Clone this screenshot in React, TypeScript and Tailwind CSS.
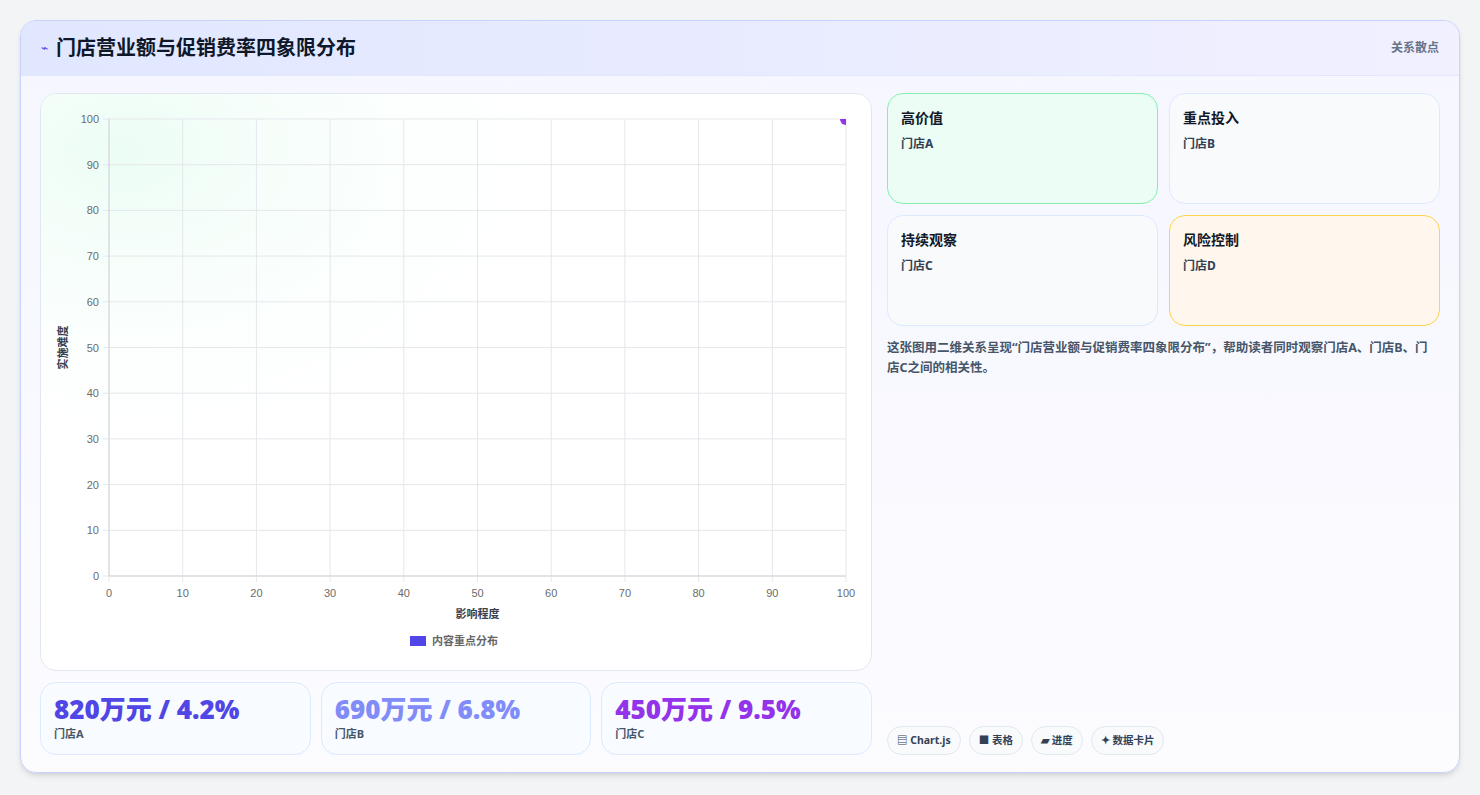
import React from "react";

const F = { fontFamily: '"Noto Sans", "Noto Sans CJK SC", sans-serif' };

function Chart() {
  const x0 = 68, x1 = 805, y0 = 25, y1 = 482;
  const ticks = [0, 10, 20, 30, 40, 50, 60, 70, 80, 90, 100];
  const X = (v: number) => x0 + ((x1 - x0) * v) / 100;
  const Y = (v: number) => y1 - ((y1 - y0) * v) / 100;
  return (
    <svg width="831" height="577" className="absolute left-0 top-0" style={{ fontFamily: '"Liberation Sans", sans-serif' }}>
      <defs>
        <radialGradient id="g" cx="0.1" cy="0.1" r="0.6">
          <stop offset="0" stopColor="#ecfdf5" />
          <stop offset="1" stopColor="#ffffff" stopOpacity="0" />
        </radialGradient>
        <clipPath id="c"><rect x={x0} y={y0} width={x1 - x0} height={y1 - y0} /></clipPath>
      </defs>
      <rect x="0" y="0" width="831" height="577" fill="url(#g)" />
      {ticks.map((t) => (
        <g key={t}>
          <line x1={X(t)} x2={X(t)} y1={y0} y2={y1 + 6} stroke="#e5e7eb" />
          <line x1={x0 - 6} x2={x1} y1={Y(t)} y2={Y(t)} stroke="#e5e7eb" />
          <text x={X(t)} y={y1 + 21} fontSize="11" fill="#6b6b6b" textAnchor="middle">{t}</text>
          <text x={x0 - 10} y={Y(t) + 4} fontSize="11" fill="#6b6b6b" textAnchor="end">{t}</text>
        </g>
      ))}
      <line x1={x0} x2={x0} y1={y0} y2={y1} stroke="#d1d5db" />
      <line x1={x0} x2={x1} y1={y1} y2={y1} stroke="#d1d5db" />
      <g clipPath="url(#c)">
        <circle cx={X(100)} cy={Y(100)} r="6" fill="#9333ea" />
      </g>
      <text x={(x0 + x1) / 2} y="524" fontSize="11" fontWeight="bold" fill="#374151" textAnchor="middle" style={F}>影响程度</text>
      <text x="0" y="0" fontSize="11" fontWeight="bold" fill="#374151" textAnchor="middle" transform={`translate(26 ${(y0 + y1) / 2}) rotate(-90)`} style={F}>实施难度</text>
      <rect x="369" y="542" width="16" height="10" fill="#4f46e5" />
      <text x="391" y="551" fontSize="11" fill="#666" fontWeight="bold" style={F}>内容重点分布</text>
    </svg>
  );
}

function Quad({ t, s, cls }: { t: string; s: string; cls: string }) {
  return (
    <div className={`h-[111px] rounded-2xl border px-[13px] py-[13px] ${cls}`}>
      <div className="text-[14px] font-bold text-[#111827]">{t}</div>
      <div className="mt-[7px] text-[12px] font-bold text-[#334155]">{s}</div>
    </div>
  );
}

function Stat({ v, s, c }: { v: string; s: string; c: string }) {
  return (
    <div className="flex-1 h-[73px] rounded-2xl border border-[#dbeafe] bg-[#f8fbff] px-[13px] pt-[9px]">
      <div className={`text-[26px] font-black leading-[34px] ${c}`}>{v}</div>
      <div className="text-[11px] font-bold text-[#475569]">{s}</div>
    </div>
  );
}

export default function App() {
  return (
    <div className="w-[1480px] h-[795px] bg-[#f3f4f6] pt-[20px] px-[20px]" style={F}>
      <div className="h-[753px] rounded-2xl border border-[#c7d2fe] bg-gradient-to-b from-[#f5f6ff] to-[#fcfcff] shadow-md overflow-hidden flex flex-col">
        <div className="h-[55px] shrink-0 flex items-center justify-between px-[20px] bg-gradient-to-r from-[#e0e7ff] to-[#f1f0ff] border-b border-[#e0e7ff]">
          <div className="flex items-center gap-[8px]">
            <span className="text-[#4f46e5] text-[12px]">⌁</span>
            <span className="text-[20px] font-bold text-[#0f172a]">门店营业额与促销费率四象限分布</span>
          </div>
          <span className="text-[12px] font-bold text-[#64748b]">关系散点</span>
        </div>
        <div className="flex-1 flex gap-[15px] px-[19px] pt-[17px] pb-[18px]">
          <div className="w-[832px] flex flex-col gap-[11px]">
            <div className="relative h-[578px] rounded-2xl border border-[#e2e8f0] bg-white overflow-hidden">
              <Chart />
            </div>
            <div className="flex gap-[10px]">
              <Stat v="820万元 / 4.2%" s="门店A" c="text-[#4f46e5]" />
              <Stat v="690万元 / 6.8%" s="门店B" c="text-[#818cf8]" />
              <Stat v="450万元 / 9.5%" s="门店C" c="text-[#9333ea]" />
            </div>
          </div>
          <div className="flex-1 flex flex-col">
            <div className="grid grid-cols-2 gap-x-[11px] gap-y-[11px]">
              <Quad t="高价值" s="门店A" cls="border-[#86efac] bg-[#ecfdf5]" />
              <Quad t="重点投入" s="门店B" cls="border-[#dbeafe] bg-[#f8fafc]" />
              <Quad t="持续观察" s="门店C" cls="border-[#dbeafe] bg-[#f8fafc]" />
              <Quad t="风险控制" s="门店D" cls="border-[#fcd34d] bg-[#fff7ed]" />
            </div>
            <p className="mt-[12px] text-[12.5px] font-bold leading-[20px] text-[#475569]">
              这张图用二维关系呈现“门店营业额与促销费率四象限分布”，帮助读者同时观察门店A、门店B、门店C之间的相关性。
            </p>
            <div className="mt-auto flex gap-[8px]">
              {["▤ Chart.js", "■ 表格", "▰ 进度", "✦ 数据卡片"].map((c) => (
                <span key={c} className="h-[29px] px-[9px] flex items-center rounded-full border border-[#e2e8f0] bg-[#f8fafc] text-[10.5px] font-bold text-[#334155]">{c}</span>
              ))}
            </div>
          </div>
        </div>
      </div>
    </div>
  );
}
